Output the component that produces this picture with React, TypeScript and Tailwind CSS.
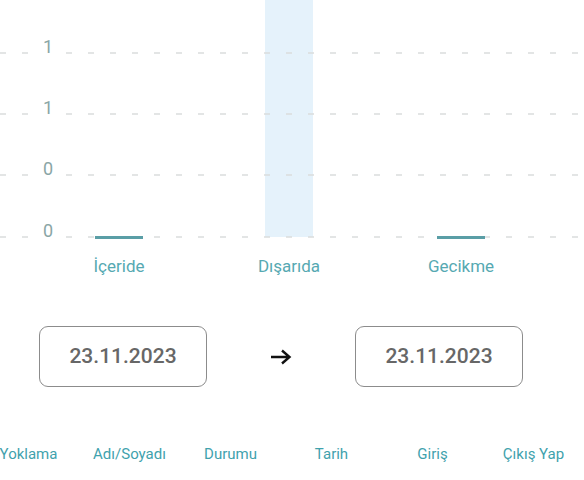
import React from "react";

const gridYs = [53, 114, 175, 237];
const gridLabels = ["1", "1", "0", "0"];

function Chart() {
  return (
    <svg width="584" height="290" viewBox="0 0 584 290" className="block shrink-0">
      <rect x="265" y="0" width="48" height="237" fill="#e5f2fb" />
      {gridYs.map((y, i) => (
        <g key={i}>
          <line x1="0" y1={y} x2="31" y2={y} stroke="#dadddd" strokeWidth="1.5" strokeDasharray="6 16" />
          <line x1="66" y1={y} x2="584" y2={y} stroke="#dadddd" strokeWidth="1.5" strokeDasharray="6 16" />
          <text
            x="48"
            y={y - 0.5}
            textAnchor="middle"
            fontFamily="Roboto, sans-serif"
            fontSize="18"
            fill="#8aa6a6"
          >
            {gridLabels[i]}
          </text>
        </g>
      ))}
      <rect x="95" y="236" width="48" height="3" fill="#5a9ea6" />
      <rect x="437" y="236" width="48" height="3" fill="#5a9ea6" />
      {[
        { x: 119, t: "İçeride" },
        { x: 289, t: "Dışarıda" },
        { x: 461, t: "Gecikme" },
      ].map((l) => (
        <text
          key={l.t}
          x={l.x}
          y="272"
          textAnchor="middle"
          fontFamily="Roboto, sans-serif"
          fontSize="17"
          fill="#56a9b2"
        >
          {l.t}
        </text>
      ))}
    </svg>
  );
}

function DateBox() {
  return (
    <div className="w-[168px] h-[61px] shrink-0 rounded-[9px] border-[1.5px] border-[#8c8c8c] flex items-center justify-center">
      <span className="text-[21px] font-medium text-[#676767] leading-none">23.11.2023</span>
    </div>
  );
}

const tabs = ["Yoklama", "Adı/Soyadı", "Durumu", "Tarih", "Giriş", "Çıkış Yap"];

export default function App() {
  return (
    <div
      className="w-[584px] h-[480px] bg-white flex flex-col overflow-hidden"
      style={{ fontFamily: "Roboto, 'Noto Sans', sans-serif" }}
    >
      <Chart />
      <div className="flex items-center mt-[36px] pl-[39px]">
        <DateBox />
        <div className="w-[148px] flex justify-center items-center">
          <svg width="22" height="16" viewBox="0 0 22 16">
            <path d="M1 8 H19 M12 1.5 L19.5 8 L12 14.5" fill="none" stroke="#111" strokeWidth="2.4" strokeLinecap="butt" strokeLinejoin="miter" />
          </svg>
        </div>
        <DateBox />
      </div>
      <div className="flex mt-[57px] ml-[-22px]">
        {tabs.map((t) => (
          <div key={t} className="w-[101px] shrink-0 text-center text-[15px] leading-5 text-[#3fa2ad]">
            {t}
          </div>
        ))}
      </div>
    </div>
  );
}
